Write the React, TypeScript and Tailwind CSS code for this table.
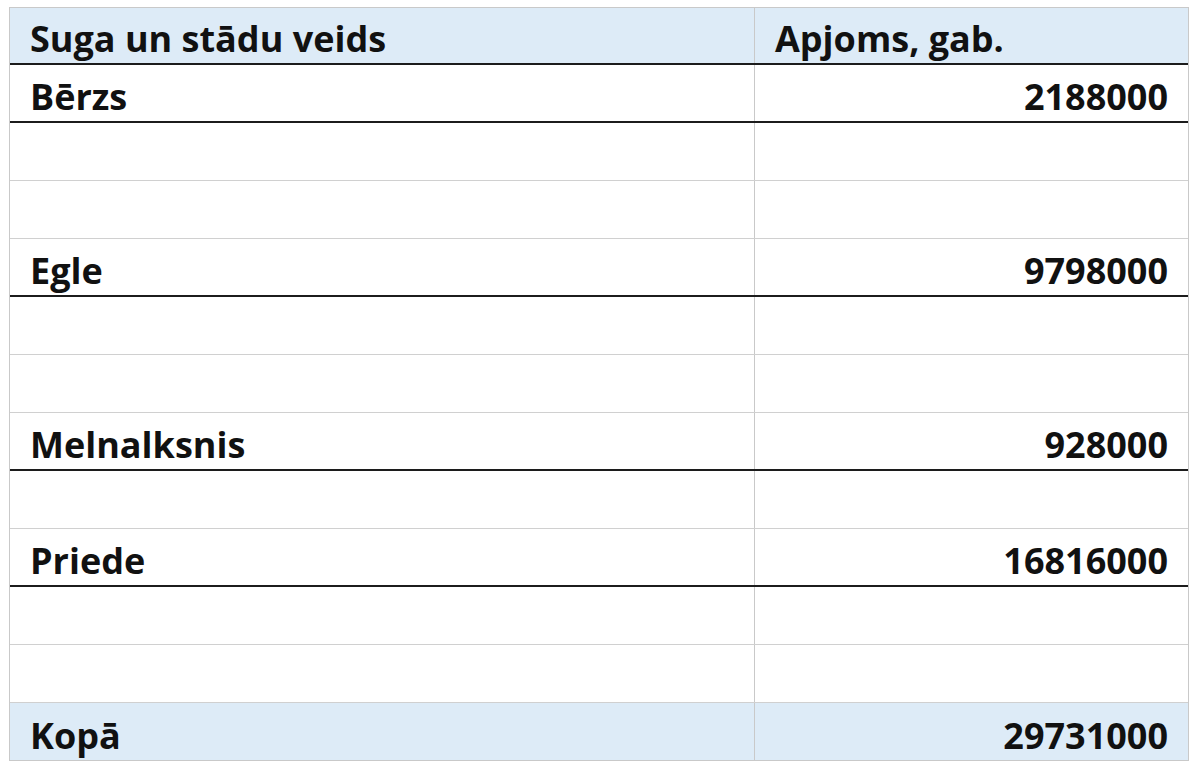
const rows: { name: string; value: string; strong: boolean }[] = [
  { name: "Bērzs", value: "2188000", strong: true },
  { name: "", value: "", strong: false },
  { name: "", value: "", strong: false },
  { name: "Egle", value: "9798000", strong: true },
  { name: "", value: "", strong: false },
  { name: "", value: "", strong: false },
  { name: "Melnalksnis", value: "928000", strong: true },
  { name: "", value: "", strong: false },
  { name: "Priede", value: "16816000", strong: true },
  { name: "", value: "", strong: false },
  { name: "", value: "", strong: false },
];

const App = () => {
  return (
    <div className="min-h-screen bg-white pt-[7px] pl-[9px] font-['Open_Sans',sans-serif] font-bold text-[36px] text-[#111]">
      <div className="w-[1180px] border border-[#c9c9c9]">
        <div className="flex h-[57px] bg-[#ddebf7] border-b-2 border-[#1c1c1c]">
          <div className="w-[745px] border-r border-[#c9c9c9] flex items-end pl-5 pb-[6px] leading-none">
            Suga un stādu veids
          </div>
          <div className="flex-1 flex items-end pl-5 pb-[6px] leading-none">Apjoms, gab.</div>
        </div>

        {rows.map((row, i) => (
          <div
            key={i}
            className={
              row.strong
                ? "flex h-[58px] border-b-2 border-[#1c1c1c]"
                : "flex h-[58px] border-b border-[#d0d0d0]"
            }
          >
            <div className="w-[745px] border-r border-[#c9c9c9] flex items-end pl-5 pb-[6px] leading-none">
              {row.name}
            </div>
            <div className="flex-1 flex items-end justify-end pr-5 pb-[6px] leading-none">{row.value}</div>
          </div>
        ))}

        <div className="flex h-[57px] bg-[#ddebf7]">
          <div className="w-[745px] border-r border-[#c9c9c9] flex items-end pl-5 pb-[6px] leading-none">Kopā</div>
          <div className="flex-1 flex items-end justify-end pr-5 pb-[6px] leading-none">29731000</div>
        </div>
      </div>
    </div>
  );
};

export default App;
